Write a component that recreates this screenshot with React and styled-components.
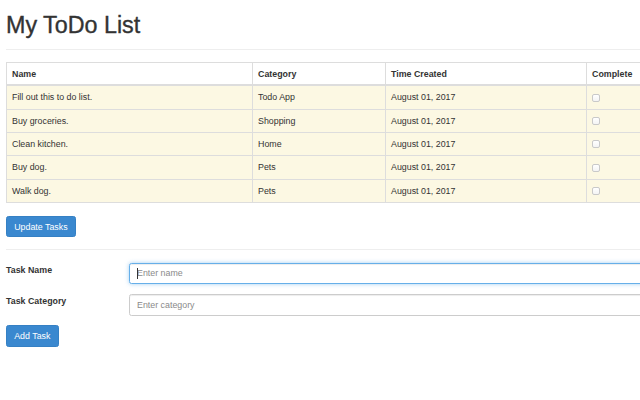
import React from "react";
import styled, { createGlobalStyle } from "styled-components";

const Global = createGlobalStyle`
  html, body { margin: 0; padding: 0; overflow: hidden; background: #fff; }
  body {
    font-family: "Liberation Sans", Arial, Helvetica, sans-serif;
    font-size: 8.86px;
    line-height: 12.4px;
    color: #333;
  }
  * { box-sizing: border-box; }
`;

const Page = styled.div`
  width: 640px;
  padding-left: 6px;
  overflow: hidden;
`;

const PageHeader = styled.header`
  padding: 13px 0 11px;
  border-bottom: 1px solid #eee;
`;

const Title = styled.h1`
  margin: 0;
  font-size: 23.3px;
  line-height: 25px;
  font-weight: 500;
  color: #333;
  -webkit-text-stroke: 0.35px #333;
`;

const Table = styled.table`
  margin-top: 12px;
  width: 780px;
  table-layout: fixed;
  border-collapse: collapse;
  border: 1px solid #ddd;
`;

const Th = styled.th`
  text-align: left;
  font-weight: bold;
  padding: 4.5px 5px;
  border: 1px solid #ddd;
  border-bottom: 2px solid #ddd;
  background: #fff;
  line-height: 12.4px;
  vertical-align: middle;
`;

const Td = styled.td`
  padding: 5px 5px;
  border: 1px solid #ddd;
  background: #fcf8e3;
  line-height: 12.33px;
  vertical-align: middle;
`;

const Check = styled.span`
  display: block;
  width: 8px;
  height: 8px;
  border: 1px solid #c9c9c9;
  border-radius: 2px;
  background: linear-gradient(#fff, #f4f4f4);
`;

const Button = styled.button`
  display: block;
  font-family: inherit;
  font-size: 8.86px;
  line-height: 12.4px;
  color: #fff;
  background: #3a88cf;
  border: 1px solid #3580c4;
  border-radius: 2.5px;
  padding: 3.8px 7.2px 3.8px;
  height: 21.5px;
  margin-top: ${(p) => p.$mt || 0}px;
  cursor: pointer;
`;

const Rule = styled.hr`
  margin: 12px 0 12.5px;
  border: 0;
  border-top: 1px solid #eee;
`;

const FormRow = styled.div`
  display: flex;
  align-items: flex-start;
  margin-bottom: 9.8px;
`;

const Label = styled.label`
  flex: 0 0 123px;
  font-weight: bold;
  line-height: 12.4px;
  padding-top: 1px;
`;

const InputWrap = styled.div`
  position: relative;
  flex: 0 0 560px;
`;

const Input = styled.input`
  display: block;
  width: 560px;
  height: 21.5px;
  font-family: inherit;
  font-size: 8.86px;
  color: #555;
  padding: 0 7px;
  border: 1px solid ${(p) => (p.$focused ? "#66afe9" : "#ccc")};
  border-radius: 2.5px;
  outline: none;
  box-shadow: ${(p) =>
    p.$focused
      ? "inset 0 1px 1px rgba(0,0,0,.075), 0 0 4px rgba(102,175,233,.6)"
      : "inset 0 1px 1px rgba(0,0,0,.075)"};
  &::placeholder { color: #8a8a8a; }
`;

const Caret = styled.span`
  position: absolute;
  left: 8px;
  top: 5px;
  width: 1px;
  height: 11px;
  background: #333;
`;

const tasks = [
  ["Fill out this to do list.", "Todo App"],
  ["Buy groceries.", "Shopping"],
  ["Clean kitchen.", "Home"],
  ["Buy dog.", "Pets"],
  ["Walk dog.", "Pets"],
];

export default function App() {
  return (
    <>
      <Global />
      <Page>
        <PageHeader>
          <Title>My ToDo List</Title>
        </PageHeader>
        <Table>
          <colgroup>
            <col style={{ width: 246 }} />
            <col style={{ width: 133 }} />
            <col style={{ width: 201 }} />
            <col style={{ width: 200 }} />
          </colgroup>
          <thead>
            <tr>
              <Th>Name</Th>
              <Th>Category</Th>
              <Th>Time Created</Th>
              <Th>Complete</Th>
            </tr>
          </thead>
          <tbody>
            {tasks.map(([name, cat]) => (
              <tr key={name}>
                <Td>{name}</Td>
                <Td>{cat}</Td>
                <Td>August 01, 2017</Td>
                <Td>
                  <Check />
                </Td>
              </tr>
            ))}
          </tbody>
        </Table>
        <Button $mt={12.7}>Update Tasks</Button>
        <Rule />
        <FormRow>
          <Label>Task Name</Label>
          <InputWrap>
            <Input $focused placeholder="Enter name" />
            <Caret />
          </InputWrap>
        </FormRow>
        <FormRow>
          <Label>Task Category</Label>
          <InputWrap>
            <Input placeholder="Enter category" />
          </InputWrap>
        </FormRow>
        <Button>Add Task</Button>
      </Page>
    </>
  );
}
